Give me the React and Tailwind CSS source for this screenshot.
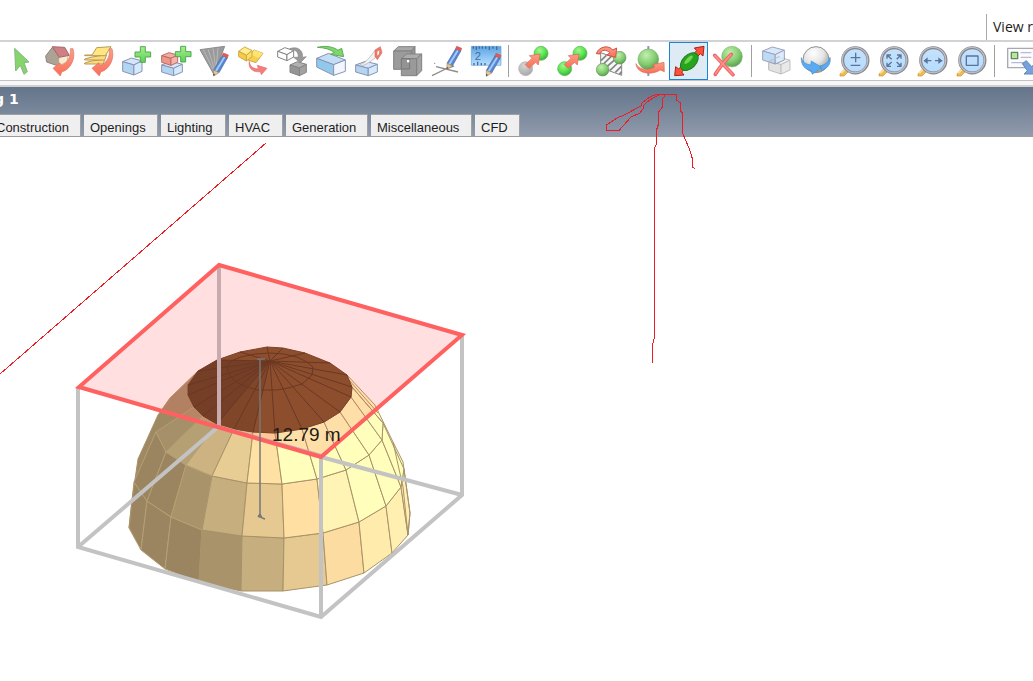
import React from "react";

const OUT = "#8a93b0";

function Icon({ children }) {
  return (
    <svg viewBox="0 0 90 90" className="size-[30px] shrink-0 overflow-visible" aria-hidden="true" strokeLinejoin="round">
      {children}
    </svg>
  );
}

function SharedPaint() {
  return (
    <svg className="absolute size-0" aria-hidden="true">
      <defs>
        <radialGradient id="green" cx="40%" cy="30%" r="70%">
          <stop offset="0" stopColor="#a4f78b" />
          <stop offset=".55" stopColor="#5ae652" />
          <stop offset="1" stopColor="#3fb039" />
        </radialGradient>
        <radialGradient id="dull" cx="40%" cy="30%" r="75%">
          <stop offset="0" stopColor="#c2eeb0" />
          <stop offset=".6" stopColor="#82cc6e" />
          <stop offset="1" stopColor="#58964d" />
        </radialGradient>
        <radialGradient id="grey" cx="40%" cy="30%" r="70%">
          <stop offset="0" stopColor="#d5d5d5" />
          <stop offset="1" stopColor="#a9a9a9" />
        </radialGradient>
        <radialGradient id="ball" cx="40%" cy="25%" r="80%">
          <stop offset="0" stopColor="#ffffff" />
          <stop offset=".5" stopColor="#e4e4e4" />
          <stop offset="1" stopColor="#8d8d8d" />
        </radialGradient>
        <linearGradient id="red" x1="0" y1="0" x2="0" y2="1">
          <stop offset="0" stopColor="#fb9d88" />
          <stop offset="1" stopColor="#fa6f57" />
        </linearGradient>
        <linearGradient id="plus" x1="0" y1="0" x2="0" y2="1">
          <stop offset="0" stopColor="#a5ef8d" />
          <stop offset="1" stopColor="#5fd055" />
        </linearGradient>
        <linearGradient id="lens" x1="0" y1="0" x2="0" y2="1">
          <stop offset="0" stopColor="#c4e2fb" />
          <stop offset="1" stopColor="#b5dcff" />
        </linearGradient>
        <linearGradient id="ruler" x1="0" y1="0" x2="0" y2="1">
          <stop offset="0" stopColor="#5aa4e2" />
          <stop offset="1" stopColor="#b6dfff" />
        </linearGradient>
      </defs>
    </svg>
  );
}

function Box({ x, y, w, h, d, top, left, right, line = OUT }) {
  const s = w * 0.45;
  return (
    <g stroke={line} strokeWidth="3">
      <path fill={top} d={`M${x} ${y + d} L${x + s} ${y} L${x + w} ${y + d * 0.8} L${x + w * 0.58} ${y + d * 1.9}Z`} />
      <path fill={left} d={`M${x} ${y + d} L${x + w * 0.58} ${y + d * 1.9} V${y + h} L${x} ${y + h - d}Z`} />
      <path fill={right} d={`M${x + w} ${y + d * 0.8} L${x + w * 0.58} ${y + d * 1.9} V${y + h} L${x + w} ${y + h - d}Z`} />
    </g>
  );
}

function BlueBox(props) {
  return <Box {...props} top="#d3e6fb" left="#b3d5f4" right="#d6eafd" />;
}

function Plus({ x, y }) {
  return (
    <path
      transform={`translate(${x} ${y})`}
      d="M16 0H31V16H47V31H31V47H16V31H0V16H16Z"
      fill="url(#plus)"
      stroke="#52a855"
      strokeWidth="3"
    />
  );
}

function Pencil({ x, y }) {
  return (
    <g transform={`translate(${x} ${y})`} strokeWidth="2">
      <path d="M32 1 L47 7 L44 16 L28 10Z" fill="#f0554e" stroke="#c25a58" />
      <path d="M28 10 L44 16 L19 60 L3 52Z" fill="#5487d6" stroke="#54699a" />
      <path d="M33 12 L38 14 L12 57 L7 54Z" fill="#a9ccf7" stroke="none" />
      <path d="M3 52 L19 60 L3 70Z" fill="#e9c795" stroke="#9a8a70" />
      <path d="M2 62 L8 66 L2 70Z" fill="#555" />
    </g>
  );
}

const swoop = (
  <path
    d="M76 8 C79 34 66 52 49 58 L44 50 L24 67 L46 90 L50 78 C78 70 93 36 84 8Z"
    fill="url(#red)"
    stroke="#dc7565"
    strokeWidth="2"
  />
);

function Lens({ children }) {
  return (
    <>
      <path d="M0 84 L18 64 L28 74 L12 90 L0 90Z" fill="#eebb50" stroke="#c5953c" strokeWidth="2" />
      <path d="M4 82 L16 70" stroke="#ffe5a0" strokeWidth="4" />
      <circle cx="46" cy="43" r="38" fill="url(#lens)" stroke="#85858f" strokeWidth="9" />
      <circle cx="45" cy="42" r="38" fill="none" stroke="#bcbcc4" strokeWidth="4" />
      <g stroke="#5d7299" strokeWidth="4" fill="none">{children}</g>
    </>
  );
}

const diagonalArrow = (
  <path
    d="M22 56 L42 37 L34 29 L66 24 L61 57 L53 49 L33 67Z"
    fill="url(#red)"
    stroke="#d9664e"
    strokeWidth="2"
  />
);

const editTools = [
  ["Select", <path key="a" d="M26 7 L69 48 L54 50 L64 77 L54 85 L43 58 L29 75Z" fill="#85d46e" stroke="#86b87d" strokeWidth="3" />],
  ["Load building", <g key="a">
    <path d="M2 30 L22 4 L42 32 L40 60 L5 48Z" fill="#aca394" stroke="#8d867e" strokeWidth="3" />
    <path d="M42 32 L70 26 L66 48 L40 60Z" fill="#f8eccd" stroke="#b0a292" strokeWidth="2" />
    <path d="M22 2 L59 4 L73 28 L43 34Z" fill="#cf8085" stroke="#a5696d" strokeWidth="3" />
    {swoop}
  </g>],
  ["Load layers", <g key="a" fill="#fbdc7b" stroke="#b89a5a" strokeWidth="3">
    <path d="M2 51 L22 45 L62 40 L58 54 H2Z" />
    <path d="M2 39 L24 33 L68 26 L62 42 H2Z" />
    <path d="M2 27 L24 27 L38 5 L81 2 L64 29 H2Z" fill="#ffe681" />
    {swoop}
  </g>],
  ["Add block", <g key="a"><BlueBox x={2} y={36} w={58} h={51} d={11} /><Plus x={39} y={2} /></g>],
  ["Add component block", <g key="a">
    <BlueBox x={2} y={46} w={62} h={43} d={11} />
    <Box x={2} y={20} w={48} h={38} d={9} top="#f4aba1" left="#ee9788" right="#f8b2a6" line="#b96b69" />
    <Plus x={43} y={1} />
  </g>],
  ["Draw outline", <g key="a">
    <path d="M0 11 L74 1 L42 86Z" fill="#9b9b9b" stroke="#8d8d8d" strokeWidth="3" />
    <path d="M10 11 L43 78 M24 9 L44 72 M39 7 L47 68 M54 6 L49 60" stroke="#b8b8b8" strokeWidth="3" />
    <Pencil x={38} y={20} />
  </g>],
  ["Move", <g key="a">
    <path d="M30 34 L48 12 L75 22 L54 50 L30 42Z" fill="#f6cf4c" stroke="#cfa94c" strokeWidth="3" />
    <path d="M48 12 L75 22 L62 36 L40 26Z" fill="#ffe574" />
    <Box x={2} y={3} w={40} h={42} d={13} top="#ffef8c" left="#f5cb49" right="#fade60" line="#cfa94c" />
    <path d="M34 46 C36 64 48 69 61 68 L58 58 L87 67 L70 86 L67 77 C44 80 30 66 34 46Z" fill="#f77c7c" stroke="#dc7272" strokeWidth="2" />
  </g>],
  ["Copy", <g key="a">
    <Box x={2} y={5} w={48} h={39} d={11} top="#fff" left="#fff" right="#fff" line="#858585" />
    <path d="M38 8 C66 -2 80 18 76 34 L88 32 L70 50 L50 34 L63 34 C66 20 58 12 38 8Z" fill="#999" stroke="#8a8a8a" strokeWidth="2" />
    <Box x={39} y={47} w={49} h={42} d={10} top="#b0b0b0" left="#959595" right="#a2a2a2" line="#848484" />
  </g>],
  ["Stretch", <g key="a" stroke={OUT} strokeWidth="3">
    <path d="M2 37 L38 22 L88 42 L53 56Z" fill="#c2def7" />
    <path d="M2 37 L53 56 V88 L2 63Z" fill="#93c8ed" />
    <path d="M53 56 L88 42 V76 L53 88Z" fill="#f4f6ff" />
    <path d="M4 4 C28 -2 52 2 66 13 L77 7 L83 32 L44 25 L55 19 C43 10 26 5 4 4Z" fill="#7dd966" stroke="#5fa95a" />
  </g>],
  ["Cut block", <g key="a">
    <BlueBox x={2} y={46} w={65} h={43} d={11} />
    <path d="M16 56 C35 50 47 30 60 13 L72 26 C57 38 43 52 20 60Z" fill="#f4f4f4" stroke="#ababab" strokeWidth="2" />
    <path d="M60 12 L76 2 L81 20 L67 41 L60 31Z" fill="#ef7767" stroke="#d67469" strokeWidth="2" />
    <path d="M67 17 L73 13 L72 24 L67 29Z" fill="#fff" />
  </g>],
  ["Combine blocks", <g key="a" stroke="#828282" strokeWidth="3">
    <path d="M2 15 L16 2 H66 L55 15Z" fill="#a9a9a9" />
    <path d="M2 15 H55 V70 H2Z" fill="#9b9b9b" />
    <path d="M55 15 L66 2 V58 L55 70Z" fill="#949494" />
    <path d="M25 38 L41 24 H86 L71 38Z" fill="#acacac" />
    <path d="M25 38 H71 V89 H25Z" fill="#9a9a9a" stroke="none" />
    <path d="M50 38 H71 V89 H25 V69" fill="none" />
    <path d="M71 38 L86 24 V74 L71 89Z" fill="#a3a3a3" />
    <path d="M25 38 H50 V69 H25Z" fill="#939393" stroke="#777" />
    <path d="M42 42 H49 V49 H42Z" fill="#fff" stroke="none" />
  </g>],
  ["Draw line", <g key="a">
    <path d="M0 89 L47 66 L66 60 M12 62 L78 78" stroke="#8c8c8c" strokeWidth="4" fill="none" />
    <circle cx="8" cy="52" r="2" fill="#888" />
    <Pencil x={42} y={0} />
  </g>],
  ["Measure", <g key="a">
    <path d="M1 1 H90 V58 H1Z" fill="url(#ruler)" stroke="#6ba5d6" strokeWidth="2" />
    <path d="M7 1V8 M16 1V12 M25 1V8 M34 1V8 M44 1V8 M55 1V12 M66 1V8 M77 1V12 M20 47V58 M9 51V58 M31 51V58 M42 51V58" stroke="#476c9b" strokeWidth="4" />
    <text x="11" y="43" fontSize="34" fill="#466ca0" fontFamily="Liberation Sans">2</text>
    <Pencil x={43} y={21} />
  </g>],
];

const dragTools = [
  ["Drag to new position", <g key="a"><circle cx="23" cy="68" r="21" fill="url(#grey)" stroke="#b2b2b2" strokeWidth="2" /><circle cx="69" cy="22" r="21" fill="url(#green)" stroke="#5cb455" strokeWidth="2" />{diagonalArrow}</g>],
  ["Drag copy", <g key="a"><circle cx="23" cy="68" r="21" fill="url(#green)" stroke="#5cb455" strokeWidth="2" /><circle cx="69" cy="22" r="21" fill="url(#green)" stroke="#5cb455" strokeWidth="2" />{diagonalArrow}</g>],
  ["Mirror", <g key="a">
    <path d="M14 20 L77 42 V88 L14 65Z" fill="#f7f7f7" stroke="#858585" strokeWidth="3" />
    <path d="M15 44 L31 28 M15 61 L46 31 M28 66 L61 37 M42 73 L75 42 M58 79 L76 61 M70 85 L77 77" stroke="#858585" strokeWidth="5" />
    <circle cx="71" cy="35" r="19" fill="url(#dull)" stroke="#659a5b" strokeWidth="2" />
    <circle cx="20" cy="71" r="19" fill="url(#dull)" stroke="#659a5b" strokeWidth="2" />
    <path d="M1 23 C8 1 39 -4 50 12 L62 6 L59 34 L32 27 L42 20 C30 10 16 10 12 24Z" fill="url(#red)" stroke="#ce5547" strokeWidth="3" />
  </g>],
  ["Rotate", <g key="a">
    <path d="M40 0V90" stroke="#8799ba" strokeWidth="6" />
    <circle cx="40" cy="40" r="31" fill="url(#dull)" stroke="#78aa6e" strokeWidth="2" />
    <path d="M3 53 C10 70 39 77 60 62 L52 56 L87 49 L88 77 L76 72 C44 91 4 80 3 53Z" fill="url(#red)" stroke="#de6a50" strokeWidth="2" />
  </g>],
  ["Stretch selected", <g key="a" stroke="#9c271c" strokeWidth="3">
    <path d="M2 89 L5 62 L14 69 L68 14 L61 6 L90 1 L87 30 L79 23 L23 78 L30 87Z" fill="#ff5139" />
    <ellipse cx="46" cy="47" rx="32" ry="20" transform="rotate(-45 46 47)" fill="#24a51c" stroke="#247a28" />
    <ellipse cx="44" cy="41" rx="17" ry="6" transform="rotate(-45 44 41)" fill="#74d452" stroke="none" />
  </g>],
  ["Delete", <g key="a">
    <circle cx="57" cy="32" r="31" fill="url(#dull)" stroke="#83c278" strokeWidth="2" />
    <path d="M5 28 L60 86 M55 25 C37 44 20 64 7 85" stroke="#ef6464" strokeWidth="11" strokeLinecap="round" fill="none" />
    <path d="M6 29 L59 85 M54 26 C37 44 20 64 8 83" stroke="#ff8d89" strokeWidth="5" strokeLinecap="round" fill="none" />
  </g>],
];

const viewTools = [
  ["Ghost view", <g key="a">
    <Box x={20} y={33} w={64} h={51} d={12} top="#f1f1f1" left="#e2e2e2" right="#e9e9e9" line="#c0c0c0" />
    <g opacity=".85"><BlueBox x={2} y={3} w={65} h={51} d={12} /></g>
    <path d="M20 47 V69 M20 47 L53 31" stroke="#c0c0c0" strokeWidth="3" />
  </g>],
  ["Orbit", <g key="a">
    <circle cx="45" cy="41" r="39" fill="url(#ball)" stroke="#929292" strokeWidth="3" />
    <path d="M1 35 C5 49 15 55 29 57 L31 45 L62 64 L34 85 L31 74 C12 70 0 58 1 35Z M87 34 C91 54 79 68 62 73 L57 60 C73 56 82 49 87 34Z" fill="#58abf4" stroke="#4a8cc8" strokeWidth="2" />
  </g>],
  ["Zoom", <Lens key="a"><path d="M47 20V49 M32 35H61 M32 58H61" /></Lens>],
  ["Fit view", <Lens key="a"><path d="M24 38V27H36 M25 28L38 40 M54 27H66V38 M65 28L53 40 M24 50V61H36 M25 60L38 48 M54 61H66V50 M65 60L53 48" /></Lens>],
  ["Pan", <Lens key="a"><path d="M18 44H40 M51 44H73" /><path d="M29 34L17 44L29 54Z M61 34L73 44L61 54Z" fill="#5d7299" stroke="none" /></Lens>],
  ["Zoom window", <Lens key="a"><path d="M28 30H63V58H28Z" /></Lens>],
];

function Tool({ label, icon, active }) {
  return (
    <button
      type="button"
      title={label}
      aria-label={label}
      aria-pressed={!!active}
      className={
        "flex h-[38px] w-full items-center justify-center " +
        (active ? "border border-[#1c84d6] bg-[#deebf5]" : "")
      }
    >
      <Icon>{icon}</Icon>
    </button>
  );
}

function Divider() {
  return <span className="h-8 w-px shrink-0 bg-[#a0a0a0]" />;
}

const tabs = [
  ["Construction", "w-[91px] -ml-[10px]"],
  ["Openings", "w-[74px]"],
  ["Lighting", "w-[65px]"],
  ["HVAC", "w-[54px]"],
  ["Generation", "w-[82px]"],
  ["Miscellaneous", "w-[101px]"],
  ["CFD", "w-[45px]"],
];

// Latitude rings of the dome, listed from left to right.
const base = [[129, 528], [141, 550], [165, 569], [199, 582], [241, 591], [283, 591], [327, 585], [364, 573], [392, 553], [408, 535], [410, 513]];
const lower = [[134, 482], [147, 501], [171, 517], [202, 530], [242, 536], [284, 538], [323, 533], [359, 522], [386, 506], [401, 487], [404, 469]];
const upper = [[156, 432], [166, 452], [186, 465], [212, 476], [247, 483], [282, 484], [317, 479], [346, 470], [369, 455], [382, 440], [383, 423]];
const rim = [[194, 407], [203, 416], [217, 424], [234, 429], [253, 432], [275, 433], [302, 429], [324, 422], [340, 412], [351, 397], [352, 387]];
const bands = [
  [base, lower, ["#9b8560", "#9b8560", "#9b8560", "#a8936a", "#c7ae7e", "#e5c990", "#fcdca0", "#ffebab", "#ffefb0", "#ffefb0"]],
  [lower, upper, ["#9b8560", "#9b8560", "#a8936a", "#c7ae7e", "#e5c990", "#ffdfa2", "#fff4b4", "#ffffbb", "#ffffbb", "#ffffbb"]],
  [upper, rim, ["#a69069", "#b5a074", "#cdb382", "#e7cd94", "#ffe1a4", "#ffffbb", "#ffffbb", "#ffffbb", "#ffffbb", "#ffffbb"]],
];
const cap = [[188, 385], [188, 395], ...rim, [347, 375], [330, 363], [305, 353], [283, 348], [267, 347], [240, 352], [217, 360], [198, 371]];
const crown = [[227, 367], [229, 374], [236, 382], [247, 387], [258, 390], [277, 390], [288, 388], [302, 384], [312, 375], [313, 367], [307, 362], [297, 357], [284, 354], [270, 353], [255, 354], [241, 357], [231, 361]];
const pts = (list) => list.map((p) => p.join(",")).join(" ");

function Model() {
  return (
    <svg viewBox="0 137 500 500" className="block size-[500px] shrink-0" role="img" aria-label="Dome block, height 12.79 m">
      <polygon points="129,528 132,500 138,459 158,415 170,398 198,371 347,375 375,405 393,442 403,462 406,490 410,513 350,520 160,520" fill="#ffffbb" />
      <polygon points="129,528 132,500 138,459 158,415 170,398 198,371 230,400 186,465 150,520" fill="#9f8963" />
      {bands.map(([a, b, colours], r) =>
        colours.map((c, i) => (
          <polygon
            key={`${r}-${i}`}
            points={pts([a[i], a[i + 1], b[i + 1], b[i]])}
            fill={c}
            stroke={i < 3 ? "#b59f74" : "#a8926a"}
            strokeWidth="1"
          />
        ))
      )}
      <polyline points="129,528 132,500 138,459 158,415 170,398 198,371" fill="none" stroke="#a8926a" />
      <path d="M347 375 L375 405 L393 442 L403 462 L410 513 L408 535 M352 387 L383 423 M349 380 L378 413 M393 442 L403 487 L408 535" fill="none" stroke="#a8926a" />
      <polygon points="219,265 462,335 321,457 79,387" fill="#ff6060" fillOpacity=".2" />
      <polygon points={pts(cap)} fill="#8d4e2e" stroke="#7a4229" />
      <polygon points="188,385 188,395 194,407 203,416 217,424 234,429 270,361 217,360 198,371" fill="#753e27" />
      <polygon points="217,424 234,429 253,432 270,361" fill="#80462a" />
      <polygon points={pts(crown)} fill="none" stroke="#6a3822" />
      {cap.map((p) => (
        <path key={p.join()} d={`M270 361 L${p[0]} ${p[1]}`} stroke="#6a3822" strokeWidth="1" />
      ))}
      <path d="M219 265 V427 L321 456" fill="none" stroke="#c8abaf" strokeWidth="4" />
      <g fill="none" stroke="#c3c3c3" strokeWidth="4">
        <path d="M78 547 L218 427" />
        <path d="M321 457 L462 495" />
        <path d="M78 387 V547 L321 617 L462 495 V335 M321 457 V617" />
      </g>
      <polygon points="219,265 462,335 321,457 79,387" fill="none" stroke="#ff6060" strokeWidth="4" />
      <path d="M260 359 V518 M257 359 H265 M258 517 L260 514 L262 518 L265 519" fill="none" stroke="#777" strokeWidth="1.5" />
      <text x="272" y="441" fontSize="19" fill="#1e1a14" fontFamily="Liberation Sans, Arial, sans-serif">12.79 m</text>
    </svg>
  );
}

function Markup() {
  return (
    <svg className="pointer-events-none absolute left-0 top-0 h-[400px] w-[720px]" viewBox="0 0 720 400" aria-hidden="true" fill="none" stroke="#ed1c24" strokeWidth="1" shapeRendering="crispEdges">
      <path d="M266 143 L0 374" />
      <path d="M652.5 363 V345 L654.5 337 V148 L656.5 144 V130 L658.5 124 V112 L662.5 107 V99 L664.5 96 V94.5" />
      <path d="M676.5 94.5 H656 L650 97 L642 103 L641 106 L624 115 L617 118 L606.5 125 V130.5 H619 L631 117 L640 113 L643 109 V106 L647 102 L653 98 L659 95" />
      <path d="M676.5 94 V100 L680.5 103 V111 L682.5 113 V133 L689 148 L692.5 159 V167 L695 169" />
    </svg>
  );
}

export default function App() {
  return (
    <div className="relative flex min-h-screen flex-col overflow-hidden bg-white font-['Liberation_Sans',Arial,sans-serif] text-[#1c1c24]">
      <SharedPaint />
      <div className="flex h-10 justify-end pt-[14px]">
        <div className="w-[47px] overflow-hidden whitespace-nowrap border-l border-[#a8a8a8] pl-[6px] font-['Open_Sans','Noto_Sans',sans-serif] text-sm leading-[25px]">
          View r
        </div>
      </div>
      <div role="toolbar" aria-label="Model tools" className="flex h-[41px] items-center overflow-hidden border-b border-t-2 border-b-[#c2c2c5] border-t-[#d2d2d5] bg-white pl-[2px]">
        <div className="grid w-[503px] shrink-0 grid-cols-13">
          {editTools.map(([label, icon]) => <Tool key={label} label={label} icon={icon} />)}
        </div>
        <div className="flex shrink-0 items-center gap-[5px] pl-[3px]">
          <Divider />
          <div className="grid w-[233px] grid-cols-6">
            {dragTools.map(([label, icon], i) => <Tool key={label} label={label} icon={icon} active={i === 4} />)}
          </div>
        </div>
        <div className="flex shrink-0 items-center gap-[6px] pl-1">
          <Divider />
          <div className="grid w-[233px] grid-cols-6">
            {viewTools.map(([label, icon]) => <Tool key={label} label={label} icon={icon} />)}
          </div>
        </div>
        <div className="flex shrink-0 items-center gap-2 pl-[3px]">
          <Divider />
          <div className="w-[38px]">
            <Tool
              label="Export"
              icon={
                <g>
                  <path d="M2 7 H81 V65 H2Z" fill="#fcfcfe" stroke="#a8a8b0" strokeWidth="4" />
                  <path d="M13 19 H32 V38 H13Z" fill="#b9e6a2" stroke="#5f8a5c" strokeWidth="4" />
                  <path d="M41 20 H73 M41 34 H73 M13 50 H56" stroke="#b8b8d8" strokeWidth="4" />
                  <path d="M46 53 L58 44 L74 62 L84 52 V84 H51 L61 74Z" fill="#76a2dc" stroke="#5f86bb" strokeWidth="3" />
                </g>
              }
            />
          </div>
        </div>
      </div>
      <div className="h-[6px] border-b-2 border-[#d0d0d0] bg-[#f7f7f7]" />
      <header className="flex h-[50px] flex-col justify-between border-b border-[#9b9b9f] bg-linear-to-b from-[#64748a] to-[#909bac]">
        <h1 className="-ml-[6px] font-['DejaVu_Sans',Verdana,sans-serif] text-sm font-bold leading-6 text-white">g 1</h1>
        <nav className="flex gap-[3px]">
          {tabs.map(([name, width]) => (
            <button
              key={name}
              type="button"
              className={`${width} h-[22px] shrink-0 whitespace-nowrap border-r border-t border-[#a0a0a0] bg-[#efefef] pl-[6px] text-left text-[13px] leading-[25px]`}
            >
              {name}
            </button>
          ))}
        </nav>
      </header>
      <main className="flex-1 overflow-hidden bg-white">
        <Model />
      </main>
      <Markup />
    </div>
  );
}
